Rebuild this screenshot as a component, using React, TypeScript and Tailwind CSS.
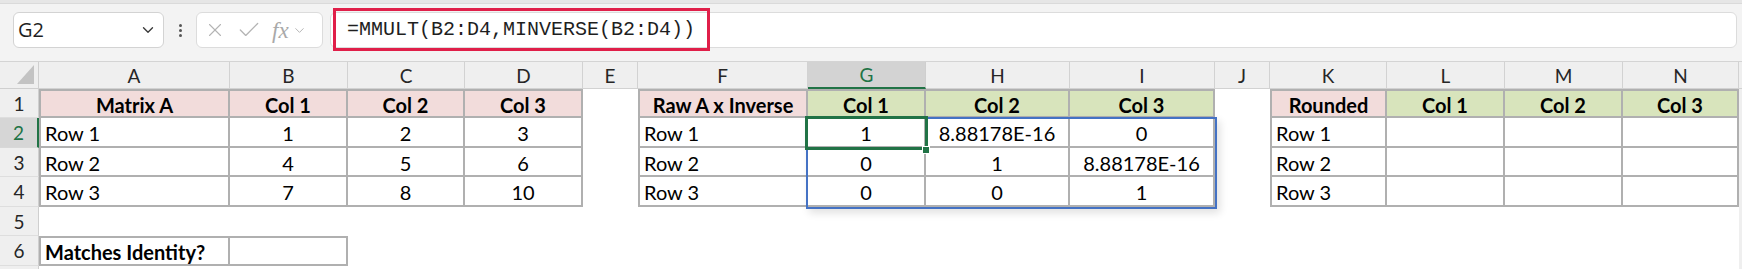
import React from "react";
import { ChevronDown, X, Check } from "lucide-react";

type Kind = "none" | "pink" | "green" | "plain";
type Cell = { t?: string; k: Kind; a?: "l" | "c"; b?: boolean; bt?: boolean; bl?: boolean };

const N: Cell = { k: "none" };
const P = (t: string, o: Partial<Cell> = {}): Cell => ({ t, k: "pink", a: "c", b: true, bt: true, ...o });
const G = (t: string, o: Partial<Cell> = {}): Cell => ({ t, k: "green", a: "c", b: true, bt: true, ...o });
const L = (t: string, o: Partial<Cell> = {}): Cell => ({ t, k: "plain", a: "l", ...o });
const C = (t: string, o: Partial<Cell> = {}): Cell => ({ t, k: "plain", a: "c", ...o });

const rows: Cell[][] = [
  [P("Matrix A", { bl: true }), P("Col 1"), P("Col 2"), P("Col 3"), N, P("Raw A x Inverse", { bl: true }), G("Col 1"), G("Col 2"), G("Col 3"), N, P("Rounded", { bl: true }), G("Col 1"), G("Col 2"), G("Col 3")],
  [L("Row 1", { bl: true }), C("1"), C("2"), C("3"), N, L("Row 1", { bl: true }), C("1"), C("8.88178E-16"), C("0"), N, L("Row 1", { bl: true }), C(""), C(""), C("")],
  [L("Row 2", { bl: true }), C("4"), C("5"), C("6"), N, L("Row 2", { bl: true }), C("0"), C("1"), C("8.88178E-16"), N, L("Row 2", { bl: true }), C(""), C(""), C("")],
  [L("Row 3", { bl: true }), C("7"), C("8"), C("10"), N, L("Row 3", { bl: true }), C("0"), C("0"), C("1"), N, L("Row 3", { bl: true }), C(""), C(""), C("")],
  [N, N, N, N, N, N, N, N, N, N, N, N, N, N],
  [L("Matches Identity?", { bl: true, bt: true, b: true }), C("", { bt: true }), N, N, N, N, N, N, N, N, N, N, N, N],
  [N, N, N, N, N, N, N, N, N, N, N, N, N, N],
];

const letters = ["A", "B", "C", "D", "E", "F", "G", "H", "I", "J", "K", "L", "M", "N"];

function cellClass(c: Cell) {
  const parts: string[] = ["flex items-center px-[4px] pt-[2px] whitespace-nowrap overflow-hidden text-[20px] text-black"];
  if (c.k === "pink") parts.push("bg-[#f2dcdb]");
  if (c.k === "green") parts.push("bg-[#d8e4bc]");
  if (c.k === "none") parts.push("bg-white");
  if (c.k === "plain") parts.push("bg-white");
  if (c.k !== "none") {
    parts.push("border-r-2 border-b-2 border-[#b0b0b0]");
    if (c.bt) parts.push("border-t-2");
    if (c.bl) parts.push("border-l-2");
  }
  if (c.a === "c") parts.push("justify-center");
  if (c.b) parts.push("font-bold");
  return parts.join(" ");
}

function Dots() {
  return (
    <div className="flex flex-col items-center gap-[2px] w-[6px]">
      <div className="w-[3px] h-[3px] rounded-full bg-[#555]" />
      <div className="w-[3px] h-[3px] rounded-full bg-[#555]" />
      <div className="w-[3px] h-[3px] rounded-full bg-[#555]" />
    </div>
  );
}

export default function App() {
  return (
    <div className="w-[1742px] h-[269px] overflow-hidden bg-white" style={{ fontFamily: "Lato, 'Open Sans', sans-serif" }}>
      {/* formula bar area */}
      <div className="relative h-[62px] bg-[#f3f3f3] border-b border-[#d4d4d4]">
        <div className="h-[4px] bg-[#e6e6e6] border-b border-[#dadada]" />
        <div className="flex items-center pl-[13px] pr-[5px] mt-[8px] h-[36px]">
          <div className="w-[151px] h-[36px] bg-white border border-[#d3d3d3] rounded-[6px] flex items-center justify-between pl-[4px] pr-[6px]">
            <span className="text-[20px] text-[#1f1f1f]" style={{ fontFamily: "'Open Sans', 'Noto Sans', sans-serif" }}>G2</span>
            <ChevronDown size={18} strokeWidth={1.8} color="#3a3a3a" />
          </div>
          <div className="w-[32px] flex justify-center">
            <Dots />
          </div>
          <div className="w-[127px] h-[36px] bg-white border border-[#dcdcdc] rounded-[6px] flex items-center pl-[7px] gap-[10px]">
            <X size={22} strokeWidth={1.2} color="#b4b4b4" />
            <Check size={26} strokeWidth={1.2} color="#b4b4b4" />
            <div className="flex items-center gap-[3px]">
              <span className="italic text-[23px] text-[#a9a9a9] leading-none" style={{ fontFamily: "'Liberation Serif', serif" }}>fx</span>
              <ChevronDown size={15} strokeWidth={1.5} color="#b0b0b0" />
            </div>
          </div>
          <div className="ml-[7px] flex-1 h-[36px] bg-white border border-[#dcdcdc] rounded-[6px] flex items-center pl-[16px]">
            <span className="text-[20px] text-[#1e1e1e]" style={{ fontFamily: "'Liberation Mono', monospace" }}>=MMULT(B2:D4,MINVERSE(B2:D4))</span>
          </div>
        </div>
        <div className="absolute left-[333px] top-[8px] w-[377px] h-[43px] border-[3px] border-[#e01f49]" />
      </div>

      {/* grid */}
      <div className="relative">
        <div className="grid grid-cols-[39px_191px_118px_117px_118px_55px_170px_118px_144px_145px_55px_117px_118px_118px_116px_1fr] grid-rows-[27px_29px_30px_29px_30px_29px_30px_20px]">
          {/* header row */}
          <div className="relative bg-[#efefef] border-r border-b border-[#cfcfcf]">
            <svg className="absolute right-[4px] bottom-[4px]" width="17" height="19" viewBox="0 0 17 19">
              <polygon points="17,0 17,19 0,19" fill="#c3c3c3" />
            </svg>
          </div>
          {letters.map((l) =>
            l === "G" ? (
              <div key={l} className="flex items-center justify-center bg-[#d3d3d3] border-r border-[#cfcfcf] border-b-2 border-b-[#217346] text-[19px] text-[#217346] pt-[2px]">
                {l}
              </div>
            ) : (
              <div key={l} className="flex items-center justify-center bg-[#efefef] border-r border-b border-[#d2d2d2] text-[19px] text-[#262626] pt-[2px]">
                {l}
              </div>
            )
          )}
          <div className="bg-[#efefef] border-b border-[#d2d2d2]" />

          {rows.map((r, ri) => (
            <React.Fragment key={ri}>
              {ri === 1 ? (
                <div className="flex items-center justify-center bg-[#d6d6d6] border-r-2 border-r-[#217346] border-b border-b-[#d8d8d8] text-[19px] text-[#217346] pt-[2px]">
                  {ri + 1}
                </div>
              ) : (
                <div className="flex items-center justify-center bg-[#efefef] border-r border-r-[#cfcfcf] border-b border-b-[#dedede] text-[19px] text-[#262626] pt-[2px]">
                  {ri < 6 ? ri + 1 : ""}
                </div>
              )}
              {r.map((c, ci) => (
                <div key={ci} className={cellClass(c)}>
                  {c.t}
                </div>
              ))}
              <div className="bg-[#efefef]" />
            </React.Fragment>
          ))}
        </div>

        {/* spill range border */}
        <div className="absolute left-[806px] top-[55px] w-[411px] h-[92px] border-2 border-[#4472c4] shadow-[3px_4px_8px_rgba(0,0,0,0.12)] pointer-events-none" />
        {/* active cell */}
        <div className="absolute left-[805px] top-[54px] w-[123px] h-[34px] border-[3px] border-[#217346] pointer-events-none" />
        <div className="absolute left-[922px] top-[84px] w-[8px] h-[8px] bg-[#217346] border border-white pointer-events-none" />
      </div>
    </div>
  );
}
